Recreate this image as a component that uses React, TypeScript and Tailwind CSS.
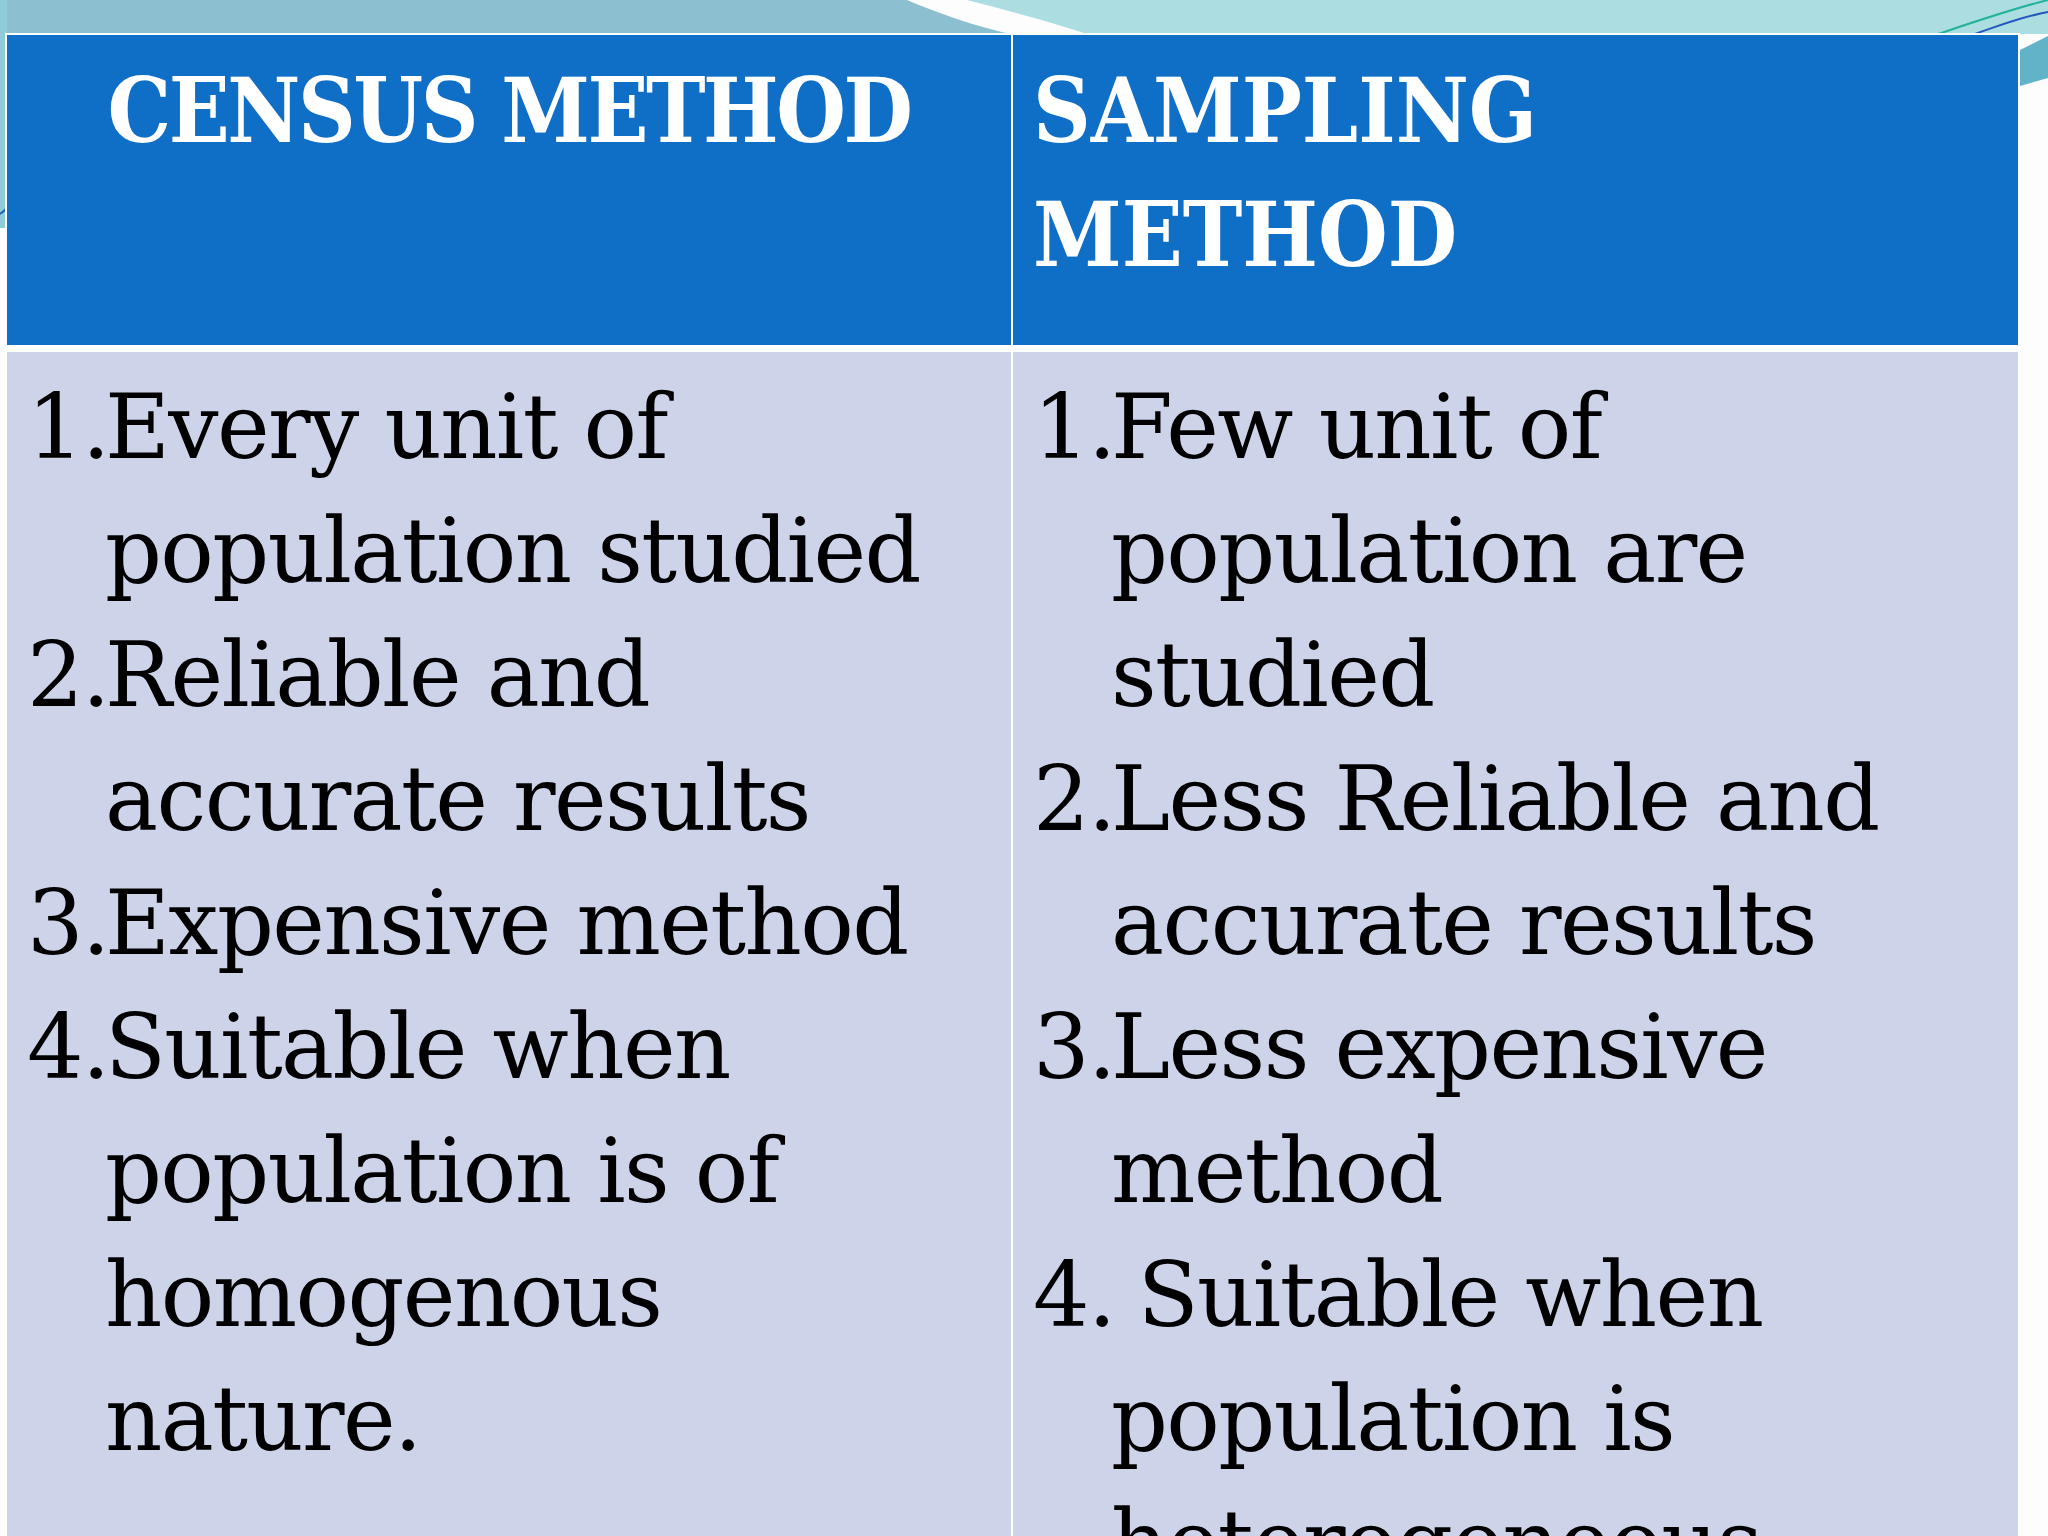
import React from 'react';

// Slide: census vs sampling comparison table over the theme's swoosh background.

type Item = { num: string; lines: string[] };

const census: Item[] = [
    { num: '1.', lines: ['Every unit of', 'population studied'] },
    { num: '2.', lines: ['Reliable and', 'accurate results'] },
    { num: '3.', lines: ['Expensive method'] },
    { num: '4.', lines: ['Suitable when', 'population is of', 'homogenous', 'nature.'] },
];

const sampling: Item[] = [
    { num: '1.', lines: ['Few unit of', 'population are', 'studied'] },
    { num: '2.', lines: ['Less Reliable and', 'accurate results'] },
    { num: '3.', lines: ['Less expensive', 'method'] },
    { num: '4.', lines: ['\u00a0Suitable when', 'population is', 'heterogeneous'] },
];

const Background: React.FC = () => (
    <svg className="absolute inset-0" width="2048" height="1536" viewBox="0 0 2048 1536">
        <rect width="2048" height="1536" fill="#fdfdfd" />
        <path d="M0 0 H907 C940 14 975 26 1010 34 H0 Z" fill="#8cbfd0" />
        <path d="M967 0 H2048 V34 H1087 C1045 20 1005 10 967 0 Z" fill="#acdde1" />
        <rect x="0" y="0" width="7" height="228" fill="#90cbd8" />
        <path d="M0 214 C3 212 5 210 7 208" stroke="#1f5fb8" strokeWidth="2" fill="none" />
        <path d="M1938 34 C1980 20 2015 8 2048 0" stroke="#23b39c" strokeWidth="2" fill="none" />
        <path d="M1975 34 C2000 25 2025 16 2048 12" stroke="#2456c0" strokeWidth="2" fill="none" />
        <path d="M2020 50 L2048 36 V78 L2020 86 Z" fill="#62b3c8" />
    </svg>
);

const ItemList: React.FC<{ items: Item[] }> = ({ items }) => (
    <div className="flex flex-col">
        {items.map((it) => (
            <div key={it.num} className="flex">
                <span className="w-[78px] shrink-0">{it.num}</span>
                <div className="flex flex-col">
                    {it.lines.map((l, i) => (
                        <span key={i} className="whitespace-nowrap">{l}</span>
                    ))}
                </div>
            </div>
        ))}
    </div>
);

export default function App() {
    return (
        <div className="relative w-[2048px] h-[1536px] overflow-hidden font-['DejaVu_Serif',serif]">
            <Background />
            <div className="relative mt-[33px] ml-[5px] w-[2015px] h-[1503px] bg-white pt-[2px] px-[2px] grid grid-cols-[1004px_1005px] grid-rows-[310px_1fr] gap-x-[2px] gap-y-[7px]">
                <div className="bg-[#0f6ec6] text-white font-bold text-[89px] leading-[124px] tracking-[-2.5px] pt-[14px] text-center font-['DejaVu_Serif_Condensed','DejaVu_Serif',serif] font-stretch-condensed">
                    CENSUS METHOD
                </div>
                <div className="bg-[#0f6ec6] text-white font-bold text-[89px] leading-[124px] pt-[14px] pl-[20px] font-['DejaVu_Serif_Condensed','DejaVu_Serif',serif] font-stretch-condensed">
                    <div>SAMPLING</div>
                    <div>METHOD</div>
                </div>
                <div className="bg-[#cdd4ea] text-black text-[89px] leading-[124px] tracking-[-1.6px] pt-[13px] pl-[20px] overflow-hidden">
                    <ItemList items={census} />
                </div>
                <div className="bg-[#cdd4ea] text-black text-[89px] leading-[124px] tracking-[-1.6px] pt-[13px] pl-[20px] overflow-hidden">
                    <ItemList items={sampling} />
                </div>
            </div>
        </div>
    );
}
